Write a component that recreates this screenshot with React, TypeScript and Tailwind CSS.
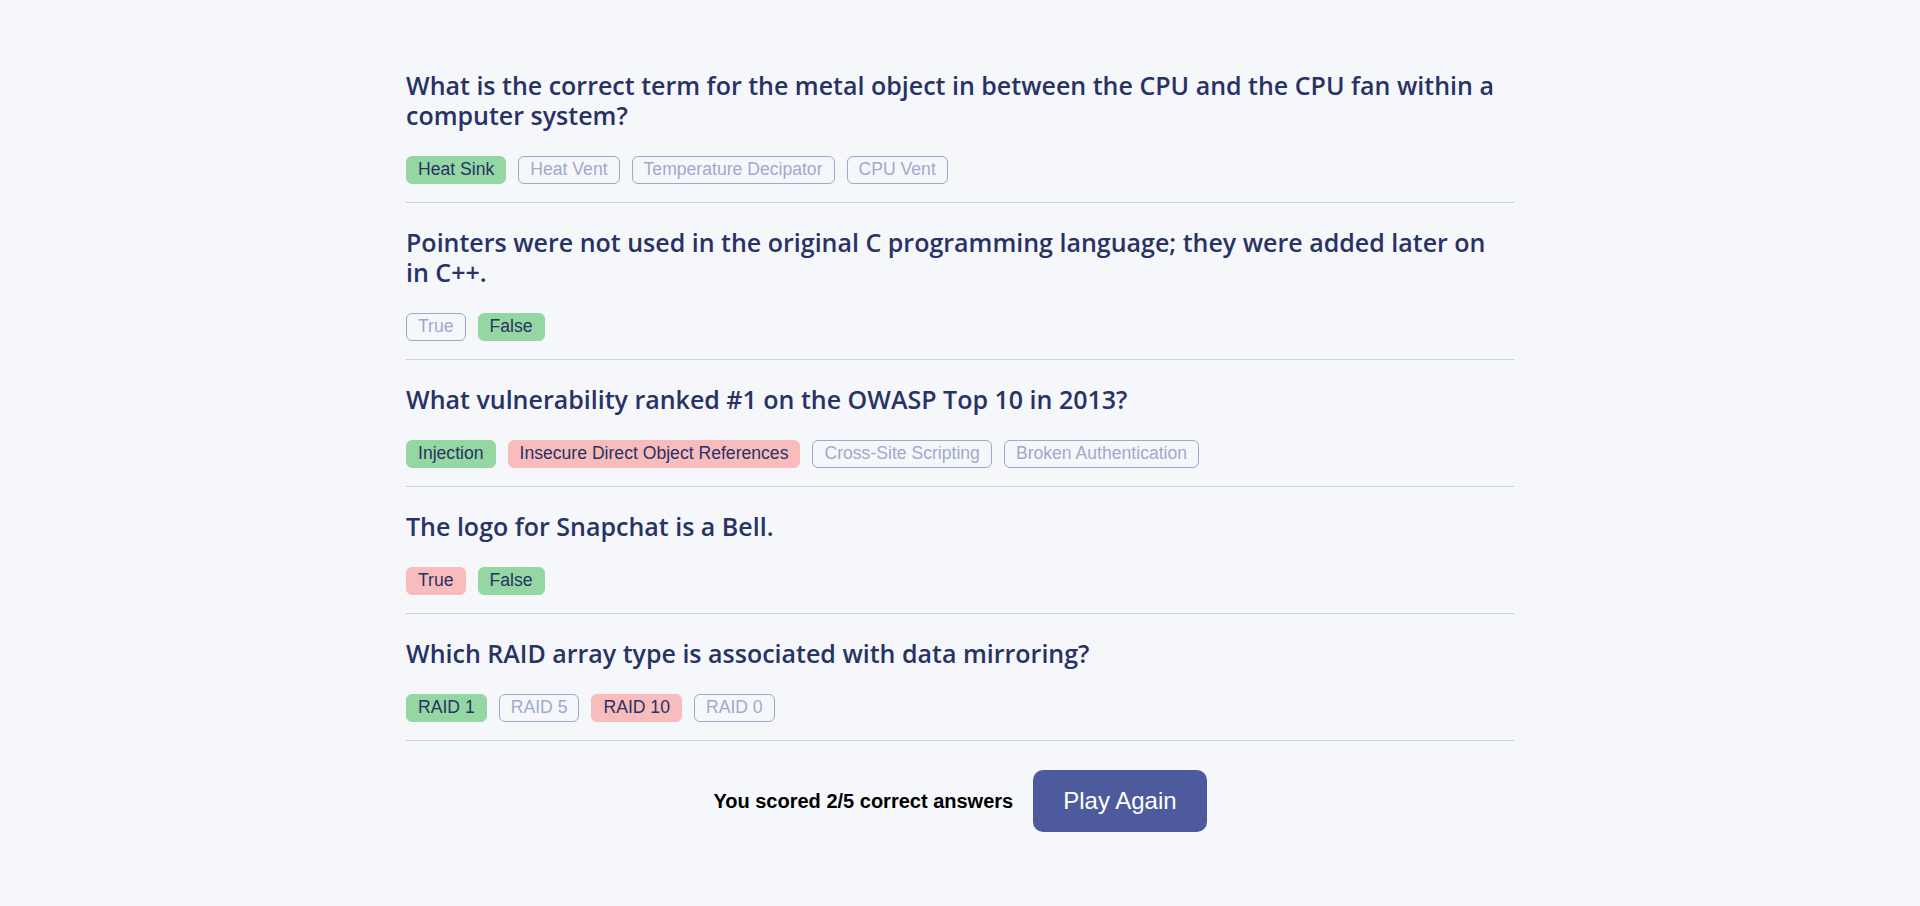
import { useState } from 'react';

type Answer = { text: string; state: 'correct' | 'wrong' | 'idle' };
type Question = { question: string; answers: Answer[] };

const QUESTIONS: Question[] = [
  {
    question:
      'What is the correct term for the metal object in between the CPU and the CPU fan within a computer system?',
    answers: [
      { text: 'Heat Sink', state: 'correct' },
      { text: 'Heat Vent', state: 'idle' },
      { text: 'Temperature Decipator', state: 'idle' },
      { text: 'CPU Vent', state: 'idle' },
    ],
  },
  {
    question:
      'Pointers were not used in the original C programming language; they were added later on in C++.',
    answers: [
      { text: 'True', state: 'idle' },
      { text: 'False', state: 'correct' },
    ],
  },
  {
    question: 'What vulnerability ranked #1 on the OWASP Top 10 in 2013?',
    answers: [
      { text: 'Injection', state: 'correct' },
      { text: 'Insecure Direct Object References', state: 'wrong' },
      { text: 'Cross-Site Scripting', state: 'idle' },
      { text: 'Broken Authentication', state: 'idle' },
    ],
  },
  {
    question: 'The logo for Snapchat is a Bell.',
    answers: [
      { text: 'True', state: 'wrong' },
      { text: 'False', state: 'correct' },
    ],
  },
  {
    question: 'Which RAID array type is associated with data mirroring?',
    answers: [
      { text: 'RAID 1', state: 'correct' },
      { text: 'RAID 5', state: 'idle' },
      { text: 'RAID 10', state: 'wrong' },
      { text: 'RAID 0', state: 'idle' },
    ],
  },
];

function AnswerButton({ answer }: { answer: Answer }) {
  const base =
    "h-[28px] px-[11px] rounded-md text-[17.6px] leading-none flex items-center border font-['Liberation_Sans',Arial,sans-serif]";
  if (answer.state === 'correct') {
    return <button className={`${base} bg-[#94d7a2] border-[#94d7a2] text-[#293264]`}>{answer.text}</button>;
  }
  if (answer.state === 'wrong') {
    return <button className={`${base} bg-[#f8bcbc] border-[#f8bcbc] text-[#293264]`}>{answer.text}</button>;
  }
  return (
    <button className={`${base} bg-transparent border-[#4d5b9e] text-[#4d5b9e] opacity-50`}>{answer.text}</button>
  );
}

export default function App() {
  const [score] = useState(2);

  return (
    <div className="min-h-screen bg-[#f5f7fb]">
      <div className="w-[1108px] mx-auto pt-[46px]">
        {QUESTIONS.map((q, i) => (
          <div key={i} className="pt-6 pb-[18px] border-b border-[#c9cde6]">
            <h2 className="font-['Open_Sans',sans-serif] font-[650] text-[25px] leading-[30px] text-[#293264] mb-[26px]">
              {q.question}
            </h2>
            <div className="flex gap-3">
              {q.answers.map((a) => (
                <AnswerButton key={a.text} answer={a} />
              ))}
            </div>
          </div>
        ))}

        {/* Score */}
        <div className="flex justify-center items-center gap-5 mt-[29px]">
          <p className="font-['Liberation_Sans',Arial,sans-serif] font-bold text-[20px] text-black">
            You scored {score}/{QUESTIONS.length} correct answers
          </p>
          <button className="bg-[#4d5b9e] text-white rounded-[10px] px-[30px] py-[17px] text-[24px] leading-[28px] font-['Liberation_Sans',Arial,sans-serif]">
            Play Again
          </button>
        </div>
      </div>
    </div>
  );
}
